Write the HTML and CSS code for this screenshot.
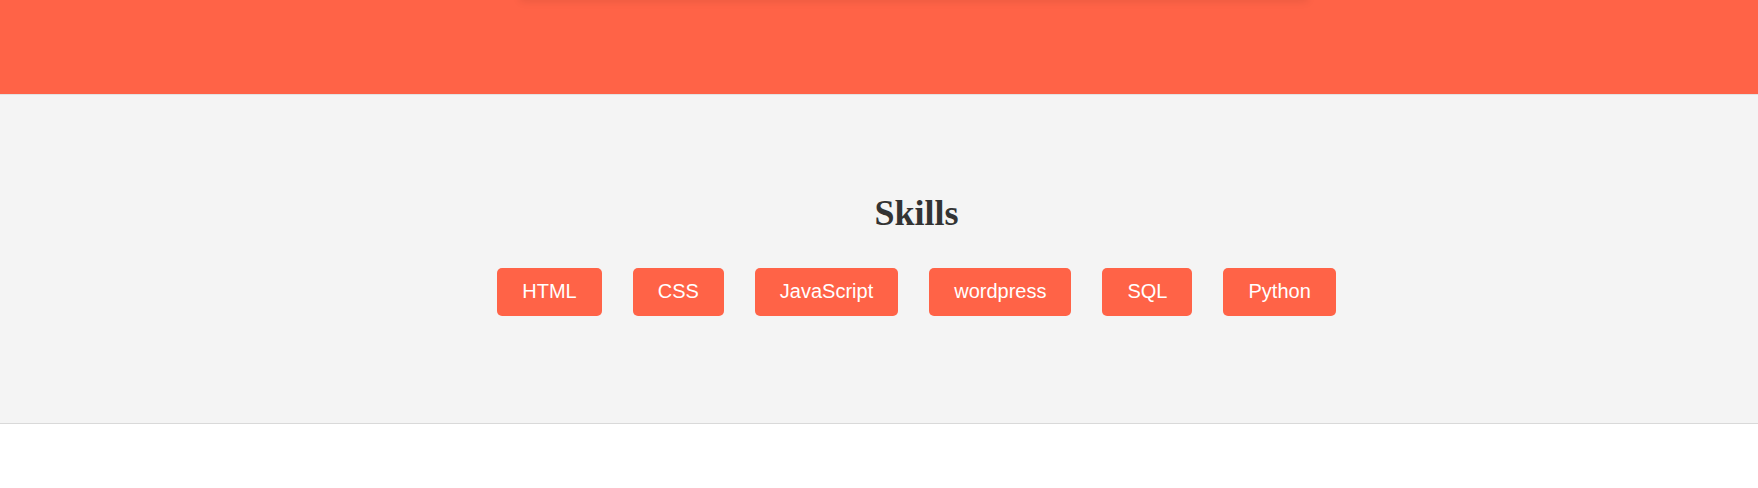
FILE: index.html
```html
<!DOCTYPE html>
<html lang="en">
<head>
<meta charset="utf-8">
<title>Skills</title>
<link rel="stylesheet" href="styles.css">
</head>
<body>
  <header class="hero">
    <div class="hero-shadow"></div>
  </header>
  <section class="skills">
    <h2 class="skills-title">Skills</h2>
    <ul class="skills-list">
      <li class="skill">HTML</li>
      <li class="skill">CSS</li>
      <li class="skill">JavaScript</li>
      <li class="skill">wordpress</li>
      <li class="skill">SQL</li>
      <li class="skill">Python</li>
    </ul>
  </section>
</body>
</html>
```

FILE: styles.css
```css
html, body {
  margin: 0;
  padding: 0;
  background: #ffffff;
}

body {
  font-family: "Liberation Sans", Arial, sans-serif;
}

.hero {
  position: relative;
  height: 94px;
  background: #ff6347;
  overflow: hidden;
}

.hero-shadow {
  position: absolute;
  top: -40px;
  left: 520px;
  width: 788px;
  height: 40px;
  box-shadow: 0 2px 8px rgba(0, 0, 0, 0.08);
}

.skills {
  background: #f4f4f4;
  border-top: 1px solid #e2e2e2;
  border-bottom: 1px solid #d9d9d9;
  padding: 98px 0 107px 75px;
}

.skills-title {
  margin: 0 0 34px;
  text-align: center;
  font-family: "Liberation Serif", "Times New Roman", serif;
  font-weight: bold;
  font-size: 36px;
  line-height: 41px;
  color: #333333;
}

.skills-list {
  list-style: none;
  margin: 0;
  padding: 0;
  display: flex;
  justify-content: center;
  gap: 31px;
}

.skill {
  background: #ff6347;
  color: #ffffff;
  font-size: 20px;
  line-height: 24px;
  padding: 11px 25px 13px;
  border-radius: 5px;
}
```
